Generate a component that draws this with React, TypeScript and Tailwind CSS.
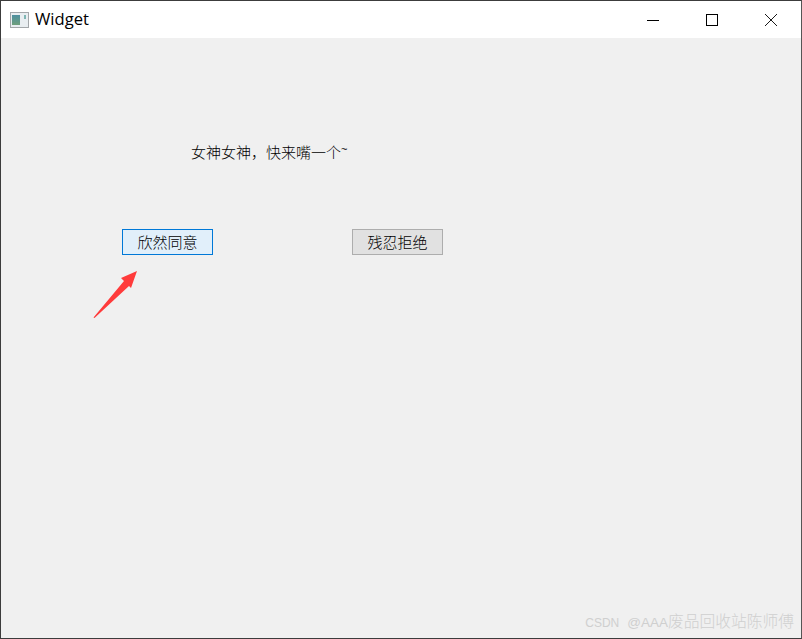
const cjk = "font-['Noto_Sans_CJK_SC','Liberation_Sans',sans-serif] font-light";

function WindowIcon() {
  return (
    <svg width="19" height="16" viewBox="0 0 19 16" className="shrink-0">
      <defs>
        <linearGradient id="pane" x1="0" y1="0" x2="0" y2="1">
          <stop offset="0" stopColor="#4e8fa0" />
          <stop offset="1" stopColor="#6fa07c" />
        </linearGradient>
      </defs>
      <rect x="0.5" y="0.5" width="18" height="15" fill="#e9eef1" stroke="#a3a7aa" />
      <rect x="2" y="3" width="8" height="10" fill="url(#pane)" />
      <rect x="14" y="3" width="2" height="4" fill="#7fb6b4" />
    </svg>
  );
}

function Button({ label, className }: { label: string; className: string }) {
  return (
    <button className={`w-[91px] h-[26px] border text-[15px] leading-[22px] text-black ${cjk} ${className}`}>
      {label}
    </button>
  );
}

function App() {
  return (
    <div className="relative w-[802px] h-[639px] flex flex-col border border-[#3c3c3c] border-r-[#555555] bg-[#f0f0f0] overflow-hidden">
      {/* title bar */}
      <div className="h-[37px] bg-white flex items-center shrink-0">
        <div className="ml-[9px] mr-[6px] flex items-center">
          <WindowIcon />
        </div>
        <span className="text-[16.6px] text-black font-['Open_Sans','Liberation_Sans',sans-serif]">Widget</span>
        <div className="ml-auto flex items-center h-full pr-[1px]">
          <div className="w-[58px] flex justify-center">
            <svg width="12" height="12" viewBox="0 0 12 12"><path d="M0 6.5H12" stroke="#000" fill="none" /></svg>
          </div>
          <div className="w-[60px] flex justify-center">
            <svg width="12" height="12" viewBox="0 0 12 12"><rect x="0.5" y="0.5" width="11" height="11" stroke="#000" fill="none" /></svg>
          </div>
          <div className="w-[58px] flex justify-center">
            <svg width="12" height="12" viewBox="0 0 12 12"><path d="M0 0L12 12M12 0L0 12" stroke="#000" strokeWidth="0.9" fill="none" /></svg>
          </div>
        </div>
      </div>

      {/* client area */}
      <div className="flex-1 pt-[104px]">
        <div className={`ml-[190px] h-[20px] leading-[20px] text-[15px] text-black whitespace-nowrap ${cjk}`}>
          女神女神，快来嘴一个<span className="inline-block -translate-y-[5px] text-[11px] font-['Liberation_Sans',sans-serif]">~</span>
        </div>
        <div className="mt-[67px] ml-[121px] flex gap-[139px]">
          <Button label="欣然同意" className="border-[#0078d7] bg-[#e1effa]" />
          <Button label="残忍拒绝" className="border-[#adadad] bg-[#e1e1e1]" />
        </div>
      </div>

      {/* annotation arrow */}
      <svg width="50" height="56" viewBox="0 0 50 56" className="absolute left-[92px] top-[267px]">
        <path d="M0.5 49.5L1.5 50L36 18L38 20L44 3L28 10L31 13Z" fill="#ff3b3b" />
      </svg>

      {/* watermark */}
      <div className={`absolute right-[7px] bottom-[5px] text-[15.75px] leading-[20px] text-[#cfcfcf] whitespace-nowrap ${cjk}`}>
        <span className="text-[12px] font-['Liberation_Sans',sans-serif]">CSDN</span>
        <span className="ml-[8px] text-[13.5px] font-['Liberation_Sans',sans-serif]">@AAA</span>废品回收站陈师傅
      </div>
    </div>
  );
}

export default App;
